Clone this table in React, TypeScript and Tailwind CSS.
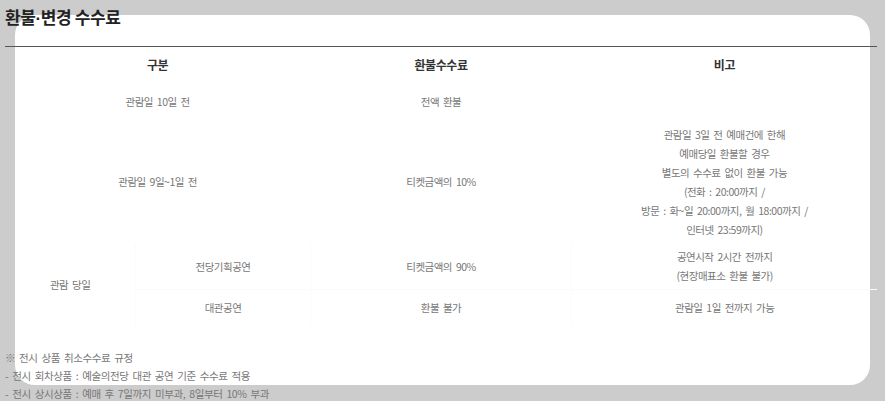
const font = "font-['Noto_Sans_CJK_KR','Noto_Sans',sans-serif]";

const noteLines = [
  "관람일 3일 전 예매건에 한해",
  "예매당일 환불할 경우",
  "별도의 수수료 없이 환불 가능",
  "(전화 : 20:00까지 /",
  "방문 : 화~일 20:00까지, 월 18:00까지 /",
  "인터넷 23:59까지)",
];

const footnotes = [
  "※ 전시 상품 취소수수료 규정",
  "- 전시 회차상품 : 예술의전당 대관 공연 기준 수수료 적용",
  "- 전시 상시상품 : 예매 후 7일까지 미부과, 8일부터 10% 부과",
];

export default function App() {
  return (
    <div className={`grid h-[401px] w-full overflow-hidden bg-[#cccccc] ${font}`}>
      {/* white card behind the content */}
      <div className="[grid-area:1/1] m-[15px] h-[370px] rounded-[20px] bg-white" />

      <div className="[grid-area:1/1] z-10 w-[877px] pl-[5px]">
        <h2 className="text-[17px] font-bold leading-[34px] tracking-[-0.4px] text-[#222]">
          환불<span className="font-['Liberation_Sans',sans-serif]">·</span>변경 수수료
        </h2>

        <table className="mt-[10px] w-full table-fixed border-t border-[#555] text-center text-[10.5px] tracking-[-0.5px] [word-spacing:2px] text-[#777]">
          <colgroup>
            <col className="w-[15%]" />
            <col className="w-[20%]" />
            <col className="w-[30%]" />
            <col className="w-[35%]" />
          </colgroup>
          <thead>
            <tr className="h-[37px] text-[12px] font-medium tracking-[-0.4px] [word-spacing:0px] text-[#333]">
              <th colSpan={2}>구분</th>
              <th>환불수수료</th>
              <th>비고</th>
            </tr>
          </thead>
          <tbody className="leading-[19px]">
            <tr className="h-[36px]">
              <td colSpan={2}>관람일 10일 전</td>
              <td>전액 환불</td>
              <td />
            </tr>
            <tr className="h-[124px]">
              <td colSpan={2}>관람일 9일~1일 전</td>
              <td>티켓금액의 10%</td>
              <td>
                {noteLines.map((line) => (
                  <div key={line}>{line}</div>
                ))}
              </td>
            </tr>
            <tr className="h-[46px]">
              <td rowSpan={2} className="border-r border-[#fbfbfb]">
                관람 당일
              </td>
              <td className="border-r border-b border-[#fbfbfb]">전당기획공연</td>
              <td className="border-r border-b border-[#fbfbfb]">티켓금액의 90%</td>
              <td className="border-b border-[#fbfbfb]">
                <div>공연시작 2시간 전까지</div>
                <div>(현장매표소 환불 불가)</div>
              </td>
            </tr>
            <tr className="h-[36px]">
              <td className="border-r border-[#fbfbfb]">대관공연</td>
              <td className="border-r border-[#fbfbfb]">환불 불가</td>
              <td>관람일 1일 전까지 가능</td>
            </tr>
          </tbody>
        </table>

        <ul className="mt-[23px] text-[10.5px] leading-[18px] tracking-[-0.4px] [word-spacing:2px] text-[#777]">
          {footnotes.map((line) => (
            <li key={line}>{line}</li>
          ))}
        </ul>
      </div>
    </div>
  );
}
